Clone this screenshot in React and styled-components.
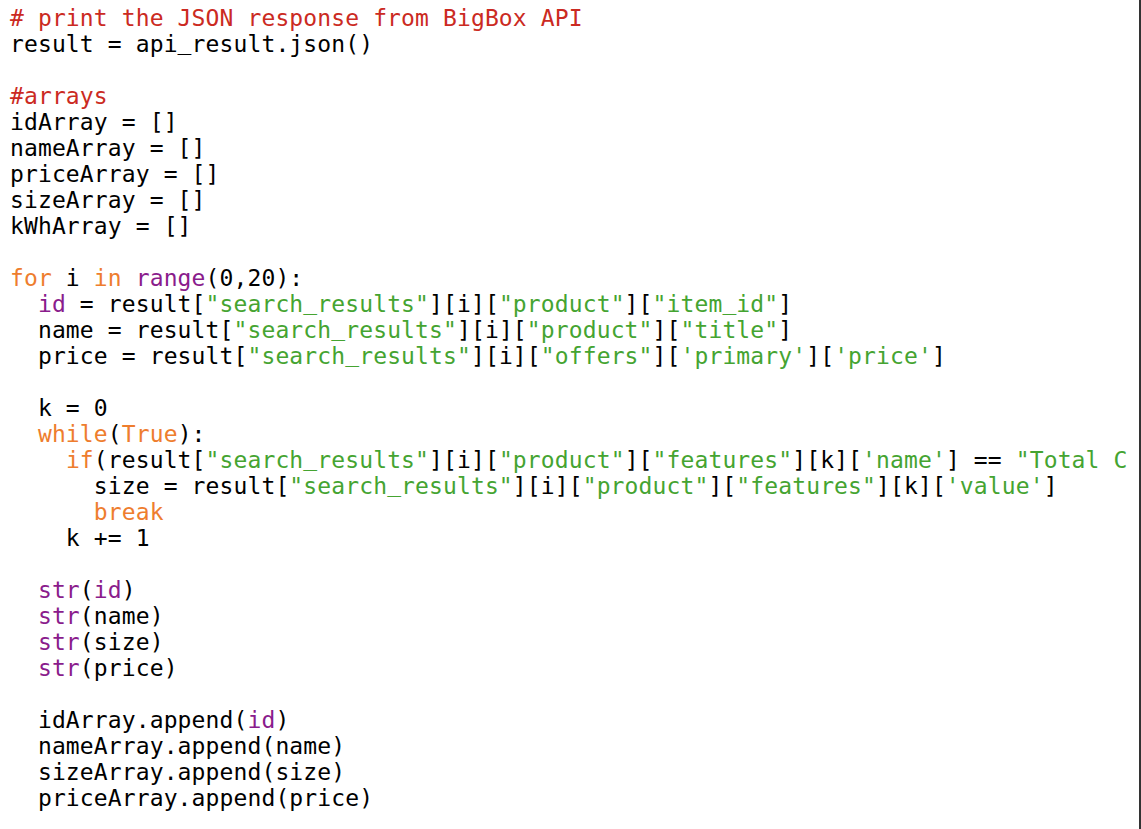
import React from "react";
import styled, { createGlobalStyle } from "styled-components";

const GlobalStyle = createGlobalStyle`
  html, body {
    margin: 0;
    padding: 0;
    background: #ffffff;
  }
`;

// token kinds: c = comment, k = keyword, b = builtin, s = string, plain text otherwise
const lines = [
  [["c", "# print the JSON response from BigBox API"]],
  ["result = api_result.json()"],
  [],
  [["c", "#arrays"]],
  ["idArray = []"],
  ["nameArray = []"],
  ["priceArray = []"],
  ["sizeArray = []"],
  ["kWhArray = []"],
  [],
  [["k", "for"], " i ", ["k", "in"], " ", ["b", "range"], "(0,20):"],
  [
    "  ",
    ["b", "id"],
    " = result[",
    ["s", '"search_results"'],
    "][i][",
    ["s", '"product"'],
    "][",
    ["s", '"item_id"'],
    "]",
  ],
  [
    "  name = result[",
    ["s", '"search_results"'],
    "][i][",
    ["s", '"product"'],
    "][",
    ["s", '"title"'],
    "]",
  ],
  [
    "  price = result[",
    ["s", '"search_results"'],
    "][i][",
    ["s", '"offers"'],
    "][",
    ["s", "'primary'"],
    "][",
    ["s", "'price'"],
    "]",
  ],
  [],
  ["  k = 0"],
  ["  ", ["k", "while"], "(", ["k", "True"], "):"],
  [
    "    ",
    ["k", "if"],
    "(result[",
    ["s", '"search_results"'],
    "][i][",
    ["s", '"product"'],
    "][",
    ["s", '"features"'],
    "][k][",
    ["s", "'name'"],
    "] == ",
    ["s", '"Total C'],
  ],
  [
    "      size = result[",
    ["s", '"search_results"'],
    "][i][",
    ["s", '"product"'],
    "][",
    ["s", '"features"'],
    "][k][",
    ["s", "'value'"],
    "]",
  ],
  ["      ", ["k", "break"]],
  ["    k += 1"],
  [],
  ["  ", ["b", "str"], "(", ["b", "id"], ")"],
  ["  ", ["b", "str"], "(name)"],
  ["  ", ["b", "str"], "(size)"],
  ["  ", ["b", "str"], "(price)"],
  [],
  ["  idArray.append(", ["b", "id"], ")"],
  ["  nameArray.append(name)"],
  ["  sizeArray.append(size)"],
  ["  priceArray.append(price)"],
];

const tokenColors = {
  c: "#cb2a22",
  k: "#ee7d2e",
  b: "#8a1c8c",
  s: "#45a431",
};

// DejaVu's underscore sits much lower than the editor font's, lift it a bit
function withUnderscores(text) {
  const bits = text.split("_");
  return bits.map((bit, i) => (
    <React.Fragment key={i}>
      {i > 0 && <Under>_</Under>}
      {bit}
    </React.Fragment>
  ));
}

function App() {
  return (
    <>
      <GlobalStyle />
      <Editor>
        <Code>
          {lines.map((parts, i) => (
            <Line key={i}>
              {parts.length === 0
                ? " "
                : parts.map((p, j) =>
                    typeof p === "string" ? (
                      <React.Fragment key={j}>{withUnderscores(p)}</React.Fragment>
                    ) : (
                      <Token key={j} $kind={p[0]}>
                        {withUnderscores(p[1])}
                      </Token>
                    )
                  )}
            </Line>
          ))}
        </Code>
      </Editor>
    </>
  );
}

const Editor = styled.div`
  display: flex;
  box-sizing: border-box;
  width: 100%;
  min-height: 100vh;
  background: #ffffff;
  border-right: 2px solid #333333;
  overflow: hidden;
`;

const Code = styled.pre`
  flex: 1;
  margin: 0;
  padding: 5px 0 0 10px;
  font-family: "DejaVu Sans Mono", "Liberation Mono", monospace;
  font-size: 23px;
  letter-spacing: 0.12px;
  line-height: 26px;
  color: #000000;
  white-space: pre;
  overflow: hidden;
`;

const Line = styled.div`
  height: 26px;
`;

const Token = styled.span`
  color: ${(p) => tokenColors[p.$kind]};
`;

const Under = styled.span`
  position: relative;
  top: -3px;
`;

export default App;
